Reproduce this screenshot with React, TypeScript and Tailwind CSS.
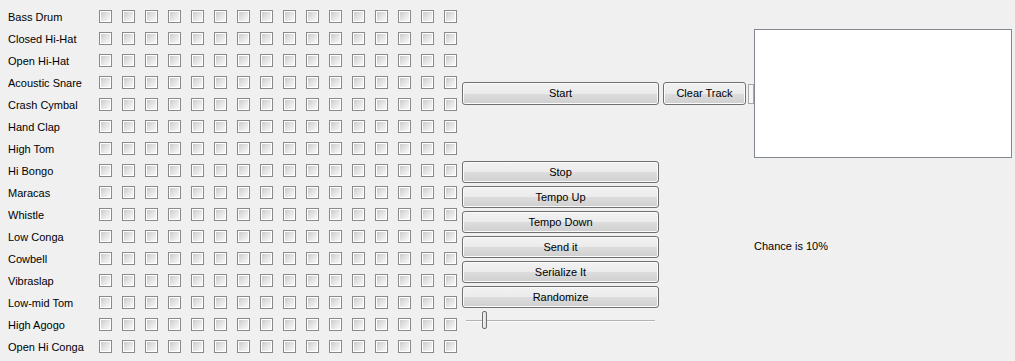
import { useState } from "react";

const instruments = [
  "Bass Drum",
  "Closed Hi-Hat",
  "Open Hi-Hat",
  "Acoustic Snare",
  "Crash Cymbal",
  "Hand Clap",
  "High Tom",
  "Hi Bongo",
  "Maracas",
  "Whistle",
  "Low Conga",
  "Cowbell",
  "Vibraslap",
  "Low-mid Tom",
  "High Agogo",
  "Open Hi Conga"
];

const Check = ({ on, onClick }: { on: boolean; onClick: () => void }) => (
  <button
    onClick={onClick}
    className="w-[13px] h-[13px] border border-[#8a8a8a] bg-white p-[1px] block"
  >
    <div className="w-full h-full bg-gradient-to-br from-[#cbcbcb] via-[#e4e4e4] to-[#f9f9f9] flex items-center justify-center text-[9px] leading-none text-[#222]">
      {on ? "✓" : ""}
    </div>
  </button>
);

const SwingButton = ({ label, className = "" }: { label: string; className?: string }) => (
  <button
    className={`h-[22px] border border-[#707070] rounded-[3px] bg-[linear-gradient(#f2f2f2_0%,#ebebeb_50%,#dddddd_50%,#cfcfcf_100%)] shadow-[inset_0_0_0_1px_#fbfbfb] text-[11px] text-black leading-none ${className}`}
  >
    {label}
  </button>
);

const App = () => {
  const [grid, setGrid] = useState<boolean[]>(() => Array(256).fill(false));
  const toggle = (i: number) =>
    setGrid((g) => g.map((v, j) => (j === i ? !v : v)));

  return (
    <div
      className="w-[1015px] h-[361px] bg-[#f0f0f0] flex overflow-hidden text-black"
      style={{ fontFamily: "'Liberation Sans', Arial, sans-serif" }}
    >
      {/* instrument names */}
      <div className="w-[99px] pl-2 pt-[6px] flex flex-col">
        {instruments.map((name) => (
          <div key={name} className="h-[22px] flex items-center text-[11px] whitespace-nowrap">
            {name}
          </div>
        ))}
      </div>

      {/* beat grid */}
      <div className="pt-[10px] grid grid-cols-[repeat(16,13px)] gap-x-[10px] gap-y-[9px] content-start w-[358px]">
        {grid.map((on, i) => (
          <Check key={i} on={on} onClick={() => toggle(i)} />
        ))}
      </div>

      {/* controls */}
      <div className="ml-[5px] flex flex-col">
        <div className="mt-[29px] h-[129px] flex items-center">
          <SwingButton label="Start" className="w-[197px] h-[23px]" />
          <SwingButton label="Clear Track" className="ml-[4px] w-[83px] h-[23px]" />
          <div className="ml-[2px] w-[6px] h-[20px] border border-[#a8a8a8] bg-[#f6f6f6]" />
          <div className="w-[258px] h-[129px] border border-[#828790] bg-white" />
        </div>
        <div className="mt-[3px] flex">
          <div className="w-[197px] flex flex-col gap-[3px]">
            <SwingButton label="Stop" />
            <SwingButton label="Tempo Up" />
            <SwingButton label="Tempo Down" />
            <SwingButton label="Send it" />
            <SwingButton label="Serialize It" />
            <SwingButton label="Randomize" />
            <div className="relative h-[21px]">
              <div className="absolute left-[4px] right-[4px] top-[9px] h-[2px] border-t border-[#b3b3b3] border-b border-b-[#fbfbfb]" />
              <div className="absolute left-[20px] top-0 w-[5px] h-[18px] rounded-[2px] border border-[#707070] bg-[linear-gradient(90deg,#f4f4f4,#dcdcdc)]" />
            </div>
          </div>
          <div className="ml-[95px] mt-[79px] text-[11px] leading-[13px] h-[13px] whitespace-nowrap">
            Chance is 10%
          </div>
        </div>
      </div>
    </div>
  );
};

export default App;
